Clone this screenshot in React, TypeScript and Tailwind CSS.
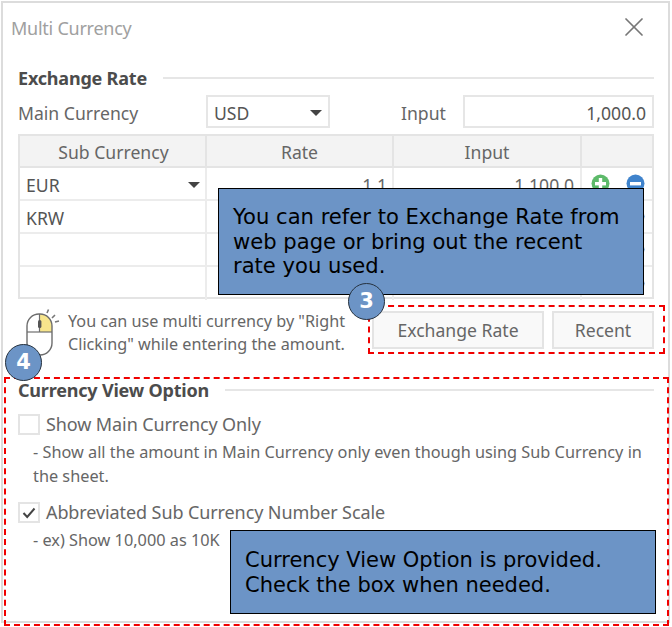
import React from 'react';
import { X } from 'lucide-react';

const rows = ['EUR', 'KRW', '', ''];

function CaretDown() {
  return <span className="w-0 h-0 border-x-[6px] border-x-transparent border-t-[6px] border-t-[#444]" />;
}

function SectionTitle({ label }: { label: string }) {
  return (
    <div className="flex items-center h-6 gap-4">
      <span className="font-bold text-[18px] text-[#4c4c4c] tracking-[-0.2px]">{label}</span>
      <span className="flex-1 h-[2px] bg-[#e6e6e6]" />
    </div>
  );
}

function RoundButton({ color, plus }: { color: string; plus?: boolean }) {
  return (
    <svg width="19" height="19" viewBox="0 0 19 19">
      <circle cx="9.5" cy="9.5" r="9" fill={color} />
      <rect x="4" y="8" width="11" height="3.4" fill="#fff" />
      {plus && <rect x="7.8" y="4" width="3.4" height="11" fill="#fff" />}
    </svg>
  );
}

function MouseIcon() {
  return (
    <svg width="34" height="48" viewBox="0 0 34 48" fill="none" className="block">
      <path d="M14 5 C21 5 26 10 26 17 L26 23 L14 23 Z" fill="#f7e58c" />
      <rect x="1" y="5" width="25" height="41" rx="12" stroke="#6d6d6d" strokeWidth="1.4" />
      <path d="M1 23 H26" stroke="#6d6d6d" strokeWidth="1.2" />
      <path d="M13.5 5 V23" stroke="#6d6d6d" strokeWidth="1.2" />
      <rect x="12" y="11" width="3.4" height="8" rx="1.6" fill="#555" />
      <path d="M21 4 L22.5 0.5 M26 9 L29 6 M29 13 L33 12" stroke="#777" strokeWidth="1.6" />
    </svg>
  );
}

function Checkbox({ label, checked }: { label: string; checked?: boolean }) {
  return (
    <div className="flex items-center gap-[6px] h-[21px]">
      <span className="w-[22px] h-[21px] border-2 border-[#e4e4e4] flex items-center justify-center">
        {checked && (
          <svg width="14" height="12" viewBox="0 0 14 12" fill="none">
            <path d="M1.5 6 L5.2 10 L12.5 1.5" stroke="#444" strokeWidth="2" />
          </svg>
        )}
      </span>
      <span className="text-[18px] text-[#666] tracking-[-0.1px]">{label}</span>
    </div>
  );
}

function Badge({ n, className }: { n: string; className: string }) {
  return (
    <div className={`absolute w-[37px] h-[37px] rounded-full bg-[#6c94c6] border border-[#26323f] flex items-center justify-center text-white font-bold text-[21px] font-['DejaVu_Sans',sans-serif] ${className}`}>
      {n}
    </div>
  );
}

export default function App() {
  return (
    <div className="relative w-[672px] h-[627px] bg-white overflow-hidden font-['Noto_Sans',sans-serif]">
      <div className="ml-[1px] mt-[1px] w-[669px] h-[622px] border-2 border-[#dcdcdc] pl-[15px] pr-[14px]">
        {/* title bar */}
        <div className="flex items-center justify-between h-[52px]">
          <span className="-ml-[7px] pb-[2px] text-[18px] text-[#a0a0a0] tracking-[-0.25px]">Multi Currency</span>
          <X className="w-8 h-8 text-[#777] mr-[4px] -mt-[4px]" strokeWidth={1.3} />
        </div>

        <div className="mt-[11px]"><SectionTitle label="Exchange Rate" /></div>

        <div className="flex items-center mt-[5px] h-[33px] text-[17.6px] text-[#666]">
          <span className="w-[188px] pt-[3px]">Main Currency</span>
          <div className="w-[124px] h-full border-2 border-[#e6e6e6] flex items-center justify-between pl-[6px] pr-[6px] pt-[3px] text-[#555]">
            USD <CaretDown />
          </div>
          <span className="ml-[71px] w-[62px] pt-[3px]">Input</span>
          <div className="flex-1 h-full border-2 border-[#e6e6e6] flex items-center justify-end pr-[6px] pt-[3px] text-[#555]">1,000.0</div>
        </div>

        {/* sub currency table */}
        <div className="mt-[6px] border-2 border-[#e4e4e4] h-[165px] text-[17.6px] text-[#666]">
          <div className="grid grid-cols-[187px_187px_188px_1fr] h-[32px] bg-[#f3f3f3] border-b-2 border-[#e4e4e4]">
            <div className="flex items-center justify-center pt-[3px] pl-[2px] border-r-2 border-[#e4e4e4]">Sub Currency</div>
            <div className="flex items-center justify-center pt-[3px] border-r-2 border-[#e4e4e4]">Rate</div>
            <div className="flex items-center justify-center pt-[3px] border-r-2 border-[#e4e4e4]">Input</div>
            <div />
          </div>
          {rows.map((name, i) => (
            <div key={i} className={`grid grid-cols-[187px_187px_188px_1fr] h-[33px] ${i < 3 ? 'border-b-2 border-[#ececec]' : ''}`}>
              <div className="flex items-center justify-between pl-[6px] pr-[5px] pt-[3px] border-r-2 border-[#ececec] text-[#555]">
                {name}
                {i === 0 && <CaretDown />}
              </div>
              <div className="flex items-center justify-end pr-[5px] pt-[3px] border-r-2 border-[#ececec]">{i === 0 ? '1.1' : ''}</div>
              <div className="flex items-center justify-end pr-[6px] pt-[3px] border-r-2 border-[#ececec]">{i === 0 ? '1,100.0' : ''}</div>
              <div className="flex items-center justify-between pl-[9px] pr-[7px]">
                <RoundButton color="#5dba6a" plus />
                <RoundButton color="#3f83cc" />
              </div>
            </div>
          ))}
        </div>

        {/* hint and buttons */}
        <div className="flex items-start mt-[10px] h-[50px]">
          <div className="ml-[8px] w-[42px] shrink-0"><MouseIcon /></div>
          <p className="w-[304px] mt-[1px] text-[16.2px] leading-[23px] text-[#666] whitespace-nowrap">
            You can use multi currency by "Right<br />Clicking" while entering the amount.
          </p>
          <button className="mt-[2px] w-[172px] h-[38px] border-2 border-[#e4e4e4] bg-[#f9f9f9] text-[17.6px] text-[#666]">Exchange Rate</button>
          <button className="ml-[8px] mt-[2px] flex-1 h-[38px] border-2 border-[#e4e4e4] bg-[#f9f9f9] text-[17.6px] text-[#666]">Recent</button>
        </div>

        {/* view option */}
        <div className="mt-[19px]"><SectionTitle label="Currency View Option" /></div>
        <div className="mt-[12px]"><Checkbox label="Show Main Currency Only" /></div>
        <p className="mt-[5px] pl-[15px] text-[16.3px] leading-[24px] text-[#666] whitespace-nowrap">
          <span className="block">- Show all the amount in Main Currency only even though using Sub Currency in</span>
          <span className="block">the sheet.</span>
        </p>
        <div className="mt-[14px]"><Checkbox label="Abbreviated Sub Currency Number Scale" checked /></div>
        <p className="mt-[5px] pl-[15px] text-[16.3px] leading-[24px] text-[#666]">- ex) Show 10,000 as 10K</p>
      </div>

      {/* annotations over the screenshot */}
      <div className="absolute left-[368px] top-[305px] w-[297px] h-[49px] border-2 border-dashed border-[#f00000]" />
      <div className="absolute left-[4px] top-[377px] w-[665px] h-[249px] border-2 border-dashed border-[#f00000]" />

      <div className="absolute left-[218px] top-[188px] w-[426px] h-[107px] bg-[#6c94c6] border border-black px-[14px] pt-[16px] font-['DejaVu_Sans',sans-serif] text-[21.1px] leading-[24.5px] text-black whitespace-nowrap">
        You can refer to Exchange Rate from<br />web page or bring out the recent<br />rate you used.
      </div>
      <div className="absolute left-[230px] top-[530px] w-[426px] h-[84px] bg-[#6c94c6] border border-black px-[14px] pt-[17px] font-['DejaVu_Sans',sans-serif] text-[21px] leading-[24.5px] text-black whitespace-nowrap">
        Currency View Option is provided.<br />Check the box when needed.
      </div>

      <Badge n="3" className="left-[348px] top-[283px]" />
      <Badge n="4" className="left-[5px] top-[344px]" />
    </div>
  );
}
